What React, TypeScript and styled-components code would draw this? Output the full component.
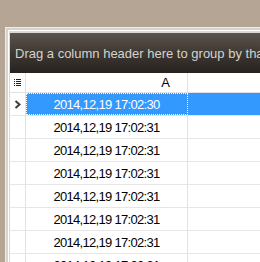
import styled, { createGlobalStyle } from "styled-components";

const GlobalStyle = createGlobalStyle`
  html, body {
    margin: 0;
    padding: 0;
    background-color: #b5a595;
    overflow: hidden;
  }
`;

const rows = [
  "2014,12,19 17:02:30",
  "2014,12,19 17:02:31",
  "2014,12,19 17:02:31",
  "2014,12,19 17:02:31",
  "2014,12,19 17:02:31",
  "2014,12,19 17:02:31",
  "2014,12,19 17:02:31",
  "2014,12,19 17:02:31",
];

const ListIcon = () => (
  <svg width="7" height="8" viewBox="0 0 7 8">
    {[0, 2, 4, 6].map((y) => (
      <g key={y} fill="#202020">
        <rect x="0" y={y} width="1" height="1" />
        <rect x="2" y={y} width="5" height="1" />
      </g>
    ))}
  </svg>
);

const Chevron = () => (
  <svg width="7" height="9" viewBox="0 0 7 9">
    <path d="M1.5 1 L5.5 4.5 L1.5 8" fill="none" stroke="#3c3c3c" strokeWidth="2" />
  </svg>
);

const App = () => {
  return (
    <>
      <GlobalStyle />
      <Window>
        <Inner>
          <Content>
            <GroupPanel>Drag a column header here to group by that column</GroupPanel>
            <HeaderRow>
              <Indicator>
                <ListIcon />
              </Indicator>
              <HeaderCell>A</HeaderCell>
              <Filler />
            </HeaderRow>
            {rows.map((value, i) => (
              <Row key={i} selected={i === 0}>
                <Indicator>{i === 0 ? <Chevron /> : null}</Indicator>
                <Cell selected={i === 0}>{value}</Cell>
                <Filler />
              </Row>
            ))}
          </Content>
        </Inner>
      </Window>
    </>
  );
};

export default App;

const Window = styled.div`
  margin: 27px 0 0 5px;
  width: 400px;
  height: 300px;
  border-left: 1px solid #eeebe8;
  border-top: 1px solid #eeebe8;
  background-color: #d6d2ce;
  padding: 2px 0 0 2px;
`;

const Inner = styled.div`
  height: 100%;
  border-left: 1px solid #ffffff;
  border-top: 1px solid #ffffff;
`;

const Content = styled.div`
  height: 100%;
  border-left: 1px solid #d8d8d8;
  border-top: 2px solid #d8d8d8;
  background-color: #ffffff;
`;

const GroupPanel = styled.div`
  height: 40px;
  display: flex;
  align-items: center;
  padding-left: 5px;
  background: linear-gradient(to bottom, #5b534d 0%, #3e3833 50%, #26221e 100%);
  color: #d6d2ce;
  font-family: "Liberation Sans", Arial, sans-serif;
  font-size: 13px;
  white-space: nowrap;
  overflow: hidden;
`;

const HeaderRow = styled.div`
  display: flex;
  height: 19px;
  border-bottom: 1px solid #e2e2e2;
  background-color: #ffffff;
`;

const Row = styled.div<{ selected: boolean }>`
  display: flex;
  height: 22px;
  border-bottom: 1px solid #e6e6e6;
  background-color: ${({ selected }) => (selected ? "#3399ff" : "#ffffff")};
`;

const Indicator = styled.div`
  width: 15px;
  flex-shrink: 0;
  display: flex;
  align-items: center;
  justify-content: center;
  border-right: 1px solid #e2e2e2;
  background-color: #ffffff;
`;

const HeaderCell = styled.div`
  width: 162px;
  flex-shrink: 0;
  box-sizing: border-box;
  padding-right: 17px;
  display: flex;
  align-items: center;
  justify-content: flex-end;
  border-right: 1px solid #e2e2e2;
  font-family: "Liberation Sans", Arial, sans-serif;
  font-size: 13px;
  color: #000000;
`;

const Cell = styled.div<{ selected: boolean }>`
  width: 162px;
  flex-shrink: 0;
  box-sizing: border-box;
  display: flex;
  align-items: center;
  justify-content: center;
  border-right: 1px solid ${({ selected }) => (selected ? "#3399ff" : "#e2e2e2")};
  outline: ${({ selected }) => (selected ? "1px dotted #ffffff" : "none")};
  outline-offset: -1px;
  font-family: "Liberation Sans", Arial, sans-serif;
  font-size: 13px;
  letter-spacing: -0.7px;
  color: ${({ selected }) => (selected ? "#ffffff" : "#000000")};
`;

const Filler = styled.div`
  flex: 1;
`;
